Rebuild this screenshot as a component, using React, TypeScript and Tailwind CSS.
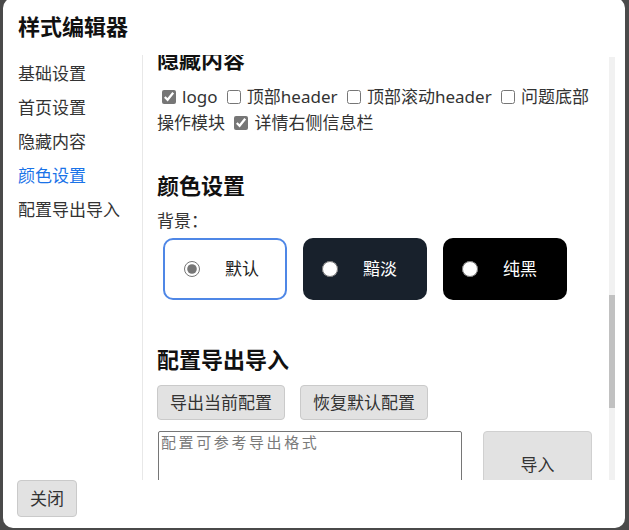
const font = "font-['Noto_Sans','Noto_Sans_CJK_SC',sans-serif]";

const menu = ["基础设置", "首页设置", "隐藏内容", "颜色设置", "配置导出导入"];

function Check({ on }: { on?: boolean }) {
  return (
    <input
      type="checkbox"
      defaultChecked={on}
      className="ml-[5px] mr-[6px] h-[14px] w-[14px] align-[-1px] accent-[#767676]"
    />
  );
}

function ColorCard({
  label,
  checked,
  className,
}: {
  label: string;
  checked?: boolean;
  className: string;
}) {
  return (
    <label
      className={`flex h-[62px] w-[124px] items-center rounded-[10px] pl-[19px] ${className}`}
    >
      <input
        type="radio"
        name="bg"
        defaultChecked={checked}
        className="h-[16px] w-[16px] accent-[#767676]"
      />
      <span className="ml-[25px] text-[17px] leading-6">{label}</span>
    </label>
  );
}

export default function App() {
  return (
    <div className={`h-[530px] w-[629px] overflow-hidden bg-[#4a4a4a] pl-[3px] ${font}`}>
      <div className="-mt-[2px] flex h-[530px] w-[622px] flex-col rounded-[10px] bg-white text-[#222]">
        {/* title */}
        <div className="h-[57px] px-[15px] pt-[14px] text-[22px] font-bold leading-[28px] text-[#111]">
          样式编辑器
        </div>

        <div className="flex h-[425px]">
          {/* side menu */}
          <div className="w-[140px] border-r border-[#e8e8e8] pl-[15px] pt-[2px]">
            {menu.map((m) => (
              <div
                key={m}
                className={`text-[17px] leading-[34px] ${m === "颜色设置" ? "text-[#1a73e8]" : "text-[#333]"}`}
              >
                {m}
              </div>
            ))}
          </div>

          {/* content (scrolled) */}
          <div className="relative flex-1 overflow-hidden">
            <div className="-mt-[11px] pl-[14px] pr-[18px]">
              <h3 className="text-[22px] font-bold leading-[30px] text-[#111]">隐藏内容</h3>
              <div className="mt-[10px] text-[17px] leading-[26px] text-[#333]">
                <Check on />logo <Check />顶部header <Check />顶部滚动header <Check />问题底部
                <br />
                操作模块 <Check on />详情右侧信息栏
              </div>

              <h3 className="mt-[34px] text-[22px] font-bold leading-[30px] text-[#111]">颜色设置</h3>
              <div className="mt-[9px] text-[17px] leading-6 text-[#333]">背景：</div>
              <div className="mt-[5px] flex gap-[16px] pl-[6px]">
                <ColorCard label="默认" checked className="border-2 border-[#4f87e6] bg-white text-[#222]" />
                <ColorCard label="黯淡" className="bg-[#18212c] text-white" />
                <ColorCard label="纯黑" className="bg-black text-white" />
              </div>

              <h3 className="mt-[44px] text-[22px] font-bold leading-[30px] text-[#111]">配置导出导入</h3>
              <div className="mt-[11px] flex gap-[15px]">
                <button className="h-[35px] rounded-[4px] border border-[#cacaca] bg-[#e2e2e2] px-[12px] text-[17px] text-[#333]">
                  导出当前配置
                </button>
                <button className="h-[35px] rounded-[4px] border border-[#cacaca] bg-[#e2e2e2] px-[12px] text-[17px] text-[#333]">
                  恢复默认配置
                </button>
              </div>
              <div className="mt-[11px] flex items-start">
                <textarea
                  placeholder="配置可参考导出格式"
                  className="ml-px h-[70px] w-[304px] resize-none rounded-[2px] border border-[#767676] px-[2px] text-[15px] leading-5 tracking-[2.6px] placeholder:text-[#7a7a7a]"
                />
                <button className="ml-[21px] h-[66px] w-[109px] rounded-[4px] border border-[#d0d0d0] bg-[#e2e2e2] pt-[2px] text-[17px] text-[#333]">
                  导入
                </button>
              </div>
            </div>

            {/* scrollbar */}
            <div className="absolute right-[10px] top-[2px] h-[423px] w-[6px] bg-[#f1f1f1]">
              <div className="mt-[238px] h-[113px] w-[6px] bg-[#c1c1c1]" />
            </div>
          </div>
        </div>

        {/* footer */}
        <div className="pl-[14px]">
          <button className="h-[37px] w-[60px] rounded-[4px] border border-[#cacaca] bg-[#e2e2e2] text-[17px] text-[#333]">
            关闭
          </button>
        </div>
      </div>
    </div>
  );
}
